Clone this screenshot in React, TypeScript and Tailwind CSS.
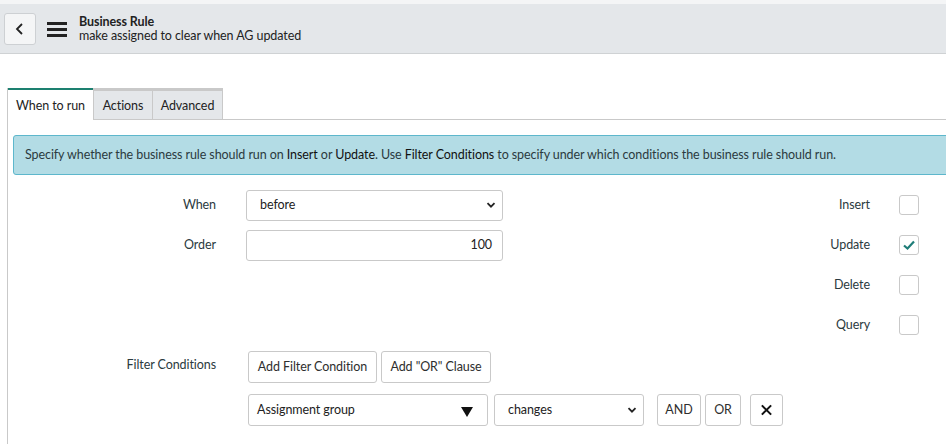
import React from 'react'

const font = { fontFamily: 'Lato, "Open Sans", sans-serif', letterSpacing: '-0.08px' }

const Chevron = () => (
  <svg width="10" height="10" viewBox="0 0 10 10" className="absolute right-[6px] top-1/2 -translate-y-1/2">
    <path d="M1.5 3.2 L5 6.7 L8.5 3.2" fill="none" stroke="#222" strokeWidth="1.8" />
  </svg>
)

const Check = ({ checked = false }: { checked?: boolean }) => (
  <div className="w-[20px] h-[20px] rounded-[3px] border border-[#c9c9c9] bg-white flex items-center justify-center">
    {checked && (
      <svg width="14" height="12" viewBox="0 0 14 12">
        <path d="M2 6.5 L5.5 9.5 L12 2.5" fill="none" stroke="#1f7d78" strokeWidth="2.2" />
      </svg>
    )}
  </div>
)

const Btn = ({ children, className = '' }: { children: React.ReactNode; className?: string }) => (
  <div className={`h-[32px] px-[9px] flex items-center justify-center rounded-[3px] border border-[#c9c9c9] bg-white text-[12.5px] text-[#2e2e2e] whitespace-nowrap ${className}`}>
    {children}
  </div>
)

export default function App() {
  return (
    <div className="w-[946px] h-[444px] overflow-hidden bg-white text-[#2e2e2e] whitespace-nowrap" style={font}>
      {/* Header */}
      <div className="h-[4px] bg-[#f4f5f6]" />
      <div className="h-[50px] bg-[#e4e7ea] border-b border-[#cfd2d4] flex items-center pl-[4px]">
        <div className="w-[32px] h-[32px] rounded-[3px] border border-[#cdd0d3] bg-[#f4f5f6] flex items-center justify-center">
          <svg width="12" height="14" viewBox="0 0 12 14">
            <path d="M8 2 L3 7 L8 12" fill="none" stroke="#222" strokeWidth="1.8" />
          </svg>
        </div>
        <svg width="20" height="16" viewBox="0 0 20 16" className="ml-[11px]">
          <rect x="0" y="1" width="20" height="3" fill="#222" />
          <rect x="0" y="7" width="20" height="3" fill="#222" />
          <rect x="0" y="13" width="20" height="3" fill="#222" />
        </svg>
        <div className="ml-[12px] leading-[14px]">
          <div className="text-[12.5px] font-bold text-[#222]">Business Rule</div>
          <div className="text-[12.5px] text-[#222]">make assigned to clear when AG updated</div>
        </div>
      </div>

      {/* Tabs panel */}
      <div className="mt-[34px] ml-[7px] border-l border-[#c9c9c9] h-[360px]">
        <div className="flex h-[32px] text-[12.5px]">
          <div className="w-[85px] border-t-2 border-[#1d8070] bg-white flex items-center justify-center pt-[2px] text-[#222]">When to run</div>
          <div className="w-[59px] border-t-[3px] border-l border-b border-[#c9c9c9] bg-[#e4e7ea] flex items-center justify-center pt-[2px] text-[#222]">Actions</div>
          <div className="w-[71px] border-t-[3px] border-l border-r border-b border-[#c9c9c9] bg-[#e4e7ea] flex items-center justify-center pt-[2px] text-[#222]">Advanced</div>
          <div className="flex-1 border-b border-[#c9c9c9]" />
        </div>

        <div className="pl-[5px] pt-[15px]">
          <div className="h-[40px] -mr-[8px] rounded-[3px] border border-[#5db7cc] bg-[#b3dce5] flex items-center pl-[11px] text-[12.5px] text-[#2b3a40]">
            <span>
              Specify whether the business rule should run on <span className="text-[#111]">Insert</span> or{' '}
              <span className="text-[#111]">Update</span>. Use <span className="text-[#111]">Filter Conditions</span> to specify under which conditions the business rule should run.
            </span>
          </div>
        </div>

        {/* Form */}
        <div className="flex mt-[10px] text-[12.5px] text-[#2b3a40]">
          <div className="w-[496px]">
            <div className="h-[40px] flex items-center">
              <div className="w-[208px] text-right">When</div>
              <div className="ml-[30px] relative w-[257px] h-[31px] rounded-[3px] border border-[#c9c9c9] flex items-center pl-[13px] text-[#222]">
                before
                <Chevron />
              </div>
            </div>
            <div className="h-[40px] flex items-center">
              <div className="w-[208px] text-right">Order</div>
              <div className="ml-[30px] w-[257px] h-[31px] rounded-[3px] border border-[#c9c9c9] flex items-center justify-end pr-[10px] text-[#222]">
                100
              </div>
            </div>
          </div>
          <div className="ml-auto mr-[27px]">
            {[
              ['Insert', false],
              ['Update', true],
              ['Delete', false],
              ['Query', false],
            ].map(([label, on]) => (
              <div key={label as string} className="h-[40px] flex items-center justify-end">
                <span>{label as string}</span>
                <div className="ml-[29px]">
                  <Check checked={on as boolean} />
                </div>
              </div>
            ))}
          </div>
        </div>

        {/* Filter conditions */}
        <div className="flex mt-[6px] text-[12.5px] text-[#2b3a40]">
          <div className="w-[208px] text-right pt-[5px]">Filter Conditions</div>
          <div className="ml-[32px]">
            <div className="flex gap-[4px]">
              <Btn className="w-[129px]">Add Filter Condition</Btn>
              <Btn className="w-[110px]">Add "OR" Clause</Btn>
            </div>
            <div className="flex items-center mt-[11px]">
              <div className="relative w-[240px] h-[32px] rounded-[3px] border border-[#c9c9c9] flex items-center pl-[8px] text-[#222]">
                Assignment group
                <svg width="12" height="10" viewBox="0 0 12 10" className="absolute right-[14px] top-[12px]">
                  <path d="M0 0 L12 0 L6 10 Z" fill="#111" />
                </svg>
              </div>
              <div className="relative ml-[6px] w-[150px] h-[32px] rounded-[3px] border border-[#c9c9c9] flex items-center pl-[13px] text-[#222]">
                changes
                <Chevron />
              </div>
              <Btn className="ml-[13px] w-[44px] px-0">AND</Btn>
              <Btn className="ml-[4px] w-[36px] px-0">OR</Btn>
              <Btn className="ml-[9px] w-[33px] px-0">
                <svg width="14" height="14" viewBox="0 0 14 14">
                  <path d="M2 2 L12 12 M12 2 L2 12" stroke="#111" strokeWidth="2.2" />
                </svg>
              </Btn>
            </div>
          </div>
        </div>
      </div>
    </div>
  )
}
